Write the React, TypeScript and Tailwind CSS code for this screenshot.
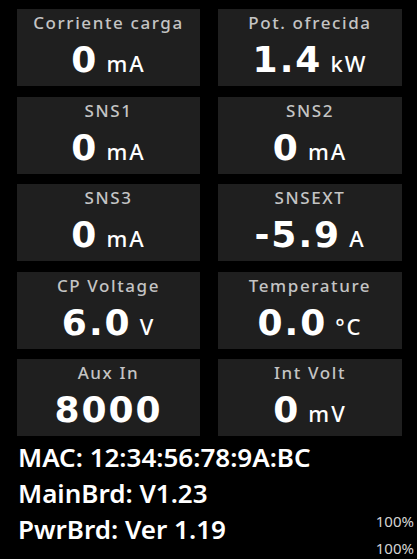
import React from 'react';

interface Reading {
  label: string;
  value: string;
  unit?: string;
}

const readings: Reading[] = [
  { label: 'Corriente carga', value: '0', unit: 'mA' },
  { label: 'Pot. ofrecida', value: '1.4', unit: 'kW' },
  { label: 'SNS1', value: '0', unit: 'mA' },
  { label: 'SNS2', value: '0', unit: 'mA' },
  { label: 'SNS3', value: '0', unit: 'mA' },
  { label: 'SNSEXT', value: '-5.9', unit: 'A' },
  { label: 'CP Voltage', value: '6.0', unit: 'V' },
  { label: 'Temperature', value: '0.0', unit: '°C' },
  { label: 'Aux In', value: '8000' },
  { label: 'Int Volt', value: '0', unit: 'mV' },
];

const Card: React.FC<{ r: Reading }> = ({ r }) => (
  <div className="h-[77px] bg-[#1f1f1f] flex flex-col items-center pt-[1px]">
    <div className="text-[17px] leading-[26px] font-medium text-[#c4c4c4] tracking-[1.6px]">
      {r.label}
    </div>
    <div className="flex items-baseline gap-[8px] mt-[6px] leading-none">
      <span className="text-[36px] font-bold text-white tracking-[2px] [font-family:'DejaVu_Sans',sans-serif]">
        {r.value}
      </span>
      {r.unit && (
        <span className="text-[22px] font-medium text-white tracking-[2px]">{r.unit}</span>
      )}
    </div>
  </div>
);

export default function App() {
  return (
    <div className="w-[417px] h-[559px] bg-black overflow-hidden [font-family:'Noto_Sans',sans-serif]">
      <div className="grid grid-cols-[183px_184px] gap-x-[18px] gap-y-[10.5px] pl-[17px] pt-[9px]">
        {readings.map((r) => (
          <Card key={r.label} r={r} />
        ))}
      </div>
      <div className="relative pl-[18px] pt-[3px] text-white font-semibold text-[26px] leading-[36px]">
        <div>MAC: 12:34:56:78:9A:BC</div>
        <div>MainBrd: V1.23</div>
        <div>PwrBrd: Ver 1.19</div>
        <div className="absolute right-[3px] top-[72px] text-[15px] leading-[27px] font-normal text-[#d4d4d4]">
          <div>100%</div>
          <div>100%</div>
        </div>
      </div>
    </div>
  );
}
